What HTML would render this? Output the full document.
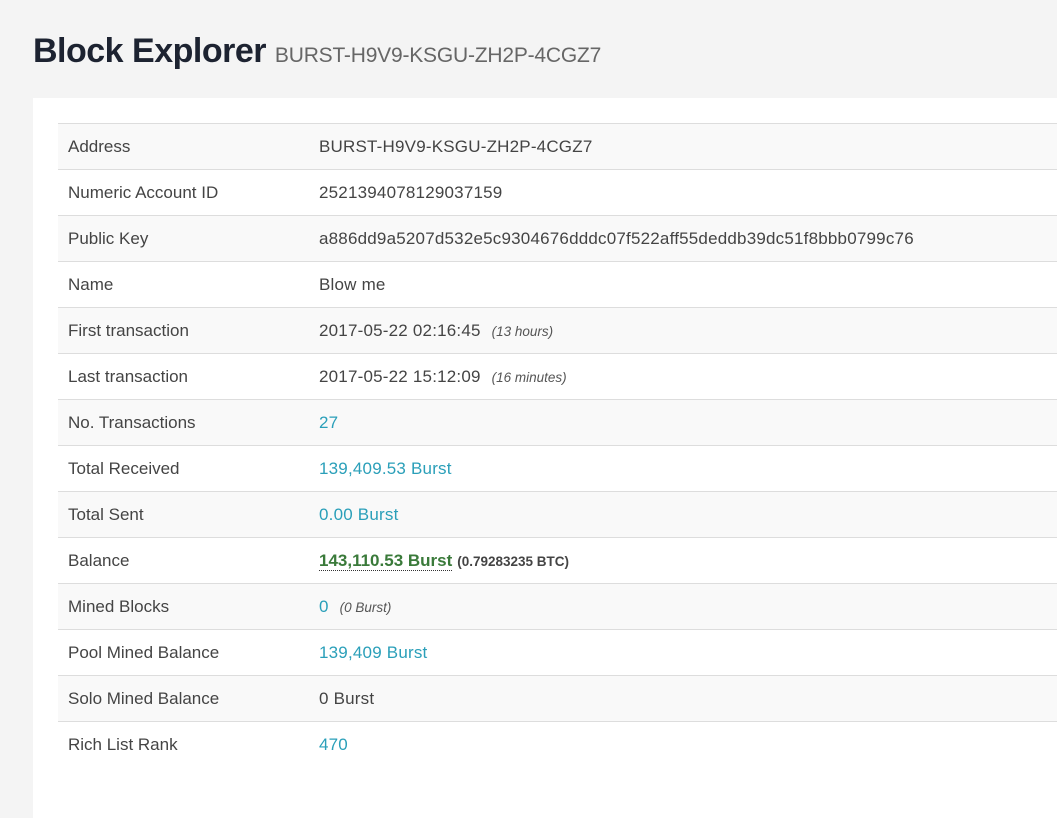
<!DOCTYPE html>
<html><head><style>
body{margin:0;background:#f4f4f4;font-family:"Liberation Sans",sans-serif;width:1057px;height:787px;overflow:hidden;position:relative}
h1{position:absolute;left:33px;top:32px;margin:0;font-size:34px;font-weight:bold;color:#1d2331;letter-spacing:-0.5px;white-space:nowrap}
h1 small{font-size:21px;font-weight:normal;color:#666;letter-spacing:-0.2px}
.panel{position:absolute;left:33px;top:98px;width:1100px;height:720px;background:#fff}
table{position:absolute;left:25px;top:25px;width:1100px;border-collapse:collapse;font-size:17px;color:#444}
td{height:45px;border-top:1px solid #ddd;padding:0 0 0 10px;vertical-align:middle;white-space:nowrap}
td:first-child{width:241px}
td:last-child{letter-spacing:0.2px}
tr:nth-child(odd) td{background:#f9f9f9}
a{color:#2a9fb9;text-decoration:none}
i{font-size:13.5px;color:#555;margin-left:6px;letter-spacing:0}
.bal{color:#3a7a3a;font-weight:bold;border-bottom:1px dotted #333;letter-spacing:0}
.btc{font-size:13.5px;font-weight:bold;color:#444;letter-spacing:0}
</style></head><body>
<h1>Block Explorer <small>BURST-H9V9-KSGU-ZH2P-4CGZ7</small></h1>
<div class="panel"><table>
<tr><td>Address</td><td>BURST-H9V9-KSGU-ZH2P-4CGZ7</td></tr>
<tr><td>Numeric Account ID</td><td>2521394078129037159</td></tr>
<tr><td>Public Key</td><td>a886dd9a5207d532e5c9304676dddc07f522aff55deddb39dc51f8bbb0799c76</td></tr>
<tr><td>Name</td><td>Blow me</td></tr>
<tr><td>First transaction</td><td>2017-05-22 02:16:45 <i>(13 hours)</i></td></tr>
<tr><td>Last transaction</td><td>2017-05-22 15:12:09 <i>(16 minutes)</i></td></tr>
<tr><td>No. Transactions</td><td><a>27</a></td></tr>
<tr><td>Total Received</td><td><a>139,409.53 Burst</a></td></tr>
<tr><td>Total Sent</td><td><a>0.00 Burst</a></td></tr>
<tr><td>Balance</td><td><span class="bal">143,110.53 Burst</span> <span class="btc">(0.79283235 BTC)</span></td></tr>
<tr><td>Mined Blocks</td><td><a>0</a> <i>(0 Burst)</i></td></tr>
<tr><td>Pool Mined Balance</td><td><a>139,409 Burst</a></td></tr>
<tr><td>Solo Mined Balance</td><td>0 Burst</td></tr>
<tr><td>Rich List Rank</td><td><a>470</a></td></tr>
</table></div>
</body></html>
